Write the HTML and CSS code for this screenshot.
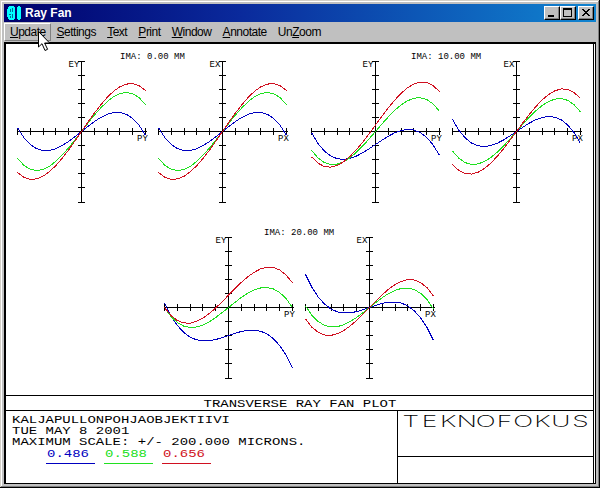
FILE: index.html
```
<!DOCTYPE html>
<html lang="en">
<head>
    <meta charset="UTF-8">
    <title>Ray Fan</title>
    <link rel="stylesheet" href="styles.css">
</head>
<body>
    <div class="window">
        <div class="titlebar">
            <svg class="app-icon" width="16" height="16" viewBox="0 0 16 16">
                <path d="M3 1h5v1h1v12h-1v1h-5v-1h-1v-2h-1v-8h1v-2h1z" fill="#00ffff"/>
                <path d="M4 4h1v3h-1zM6 3h1v4h-1zM3 9h2v1h-2zM6 9h1v4h-1zM4 11h1v2h-1z" fill="#006a9a"/>
                <path d="M12 1h2v1h1v12h-1v1h-2v-1h-1v-12h1z" fill="#00ffff"/>
            </svg>
            <span class="title">Ray Fan</span>
            <div class="controls">
                <span class="control"><svg width="14" height="12"><path d="M3 8h6v2h-6z"/></svg></span>
                <span class="control"><svg width="14" height="12"><path d="M2 1h9v9h-9zM3 3v6h7v-6z" fill-rule="evenodd"/></svg></span>
                <span class="control close"><svg width="14" height="12"><path d="M3 2h2v1h1v1h2v-1h1v-1h2v1h-1v1h-1v1h-1v1h1v1h1v1h1v1h-2v-1h-1v-1h-2v1h-1v1h-2v-1h1v-1h1v-1h1v-1h-1v-1h-1v-1h-1z"/></svg></span>
            </div>
        </div>

        <div class="menubar">
            <span class="menu-item active"><u>U</u>pdate</span>
            <span class="menu-item"><u>S</u>ettings</span>
            <span class="menu-item"><u>T</u>ext</span>
            <span class="menu-item"><u>P</u>rint</span>
            <span class="menu-item"><u>W</u>indow</span>
            <span class="menu-item"><u>A</u>nnotate</span>
            <span class="menu-item">Un<u>Z</u>oom</span>
        </div>

        <div class="client">
            <div class="sheet">
                <svg id="plots" class="plots" width="587" height="351"></svg>
                <div class="caption"><span class="plotter">TRANSVERSE RAY FAN PLOT</span></div>
                <div class="footer">
                    <div class="info">
                        <div class="plotter">KALJAPULLONPOHJAOBJEKTIIVI</div>
                        <div class="plotter">TUE MAY 8 2001</div>
                        <div class="plotter">MAXIMUM SCALE: +/- 200.000 MICRONS.</div>
                        <div class="legend">
                            <div class="wave blue"><span class="plotter">0.486</span></div>
                            <div class="wave green"><span class="plotter">0.588</span></div>
                            <div class="wave red"><span class="plotter">0.656</span></div>
                        </div>
                    </div>
                    <div class="company">
                        <div class="company-name">
                            <svg width="195" height="45">
                                <text class="brand" transform="scale(1.6 1)" x="8 19.7 31.4 43 54.8 66.6 78.2 90.3 101.8 114" y="16">TEKNOFOKUS</text>
                            </svg>
                        </div>
                        <div class="company-note"></div>
                    </div>
                </div>
            </div>
        </div>

        <svg class="cursor" width="13" height="21" viewBox="0 0 13 21">
            <path d="M.5 .5v15.5l3.5-3.3 3 6.8 2.6-1.2-3-6.3h5z" fill="#fff" stroke="#000"/>
        </svg>
    </div>
    <script src="plots.js"></script>
</body>
</html>
```
FILE: styles.css
```
body {
    margin: 0;
    background: #c0c0c0;
    font-family: "Liberation Sans", Arial, sans-serif;
    font-size: 12px;
    color: #000;
}

.window {
    position: relative;
    box-sizing: border-box;
    width: 600px;
    height: 488px;
    padding: 4px;
    background: #c0c0c0;
    box-shadow: inset -1px -1px #000, inset 1px 1px #d4d0c8, inset -2px -2px #808080, inset 2px 2px #fff;
}

.titlebar {
    display: flex;
    align-items: center;
    height: 18px;
    padding: 0 2px;
    background: linear-gradient(90deg, #00006c, #0a2a9c 40%, #1084d0);
}

.app-icon {
    display: block;
    shape-rendering: crispEdges;
}

.title {
    flex: 1;
    margin-left: 3px;
    color: #fff;
    font-weight: bold;
    line-height: 18px;
}

.controls {
    display: flex;
}

.control {
    box-sizing: border-box;
    width: 16px;
    height: 14px;
    border: 1px solid;
    border-color: #fff #000 #000 #fff;
    background: #c0c0c0;
    box-shadow: inset -1px -1px #808080;
}

.control svg {
    display: block;
    shape-rendering: crispEdges;
}

.control.close {
    margin-left: 2px;
}

.menubar {
    display: flex;
    align-items: center;
    height: 20px;
}

.menu-item {
    box-sizing: border-box;
    height: 18px;
    padding: 0 4.6px;
    border: 1px solid transparent;
    line-height: 17px;
    letter-spacing: -0.5px;
}

.menu-item u {
    text-underline-offset: 1px;
}

.menu-item.active {
    width: 47px;
    padding: 0 0 0 5px;
    border-color: #fff #808080 #808080 #fff;
}

.client {
    box-sizing: border-box;
    height: 442px;
    padding-right: 1px;
    border: solid #000;
    border-width: 2px 1px 1px 2px;
    background: #fff;
}

.sheet {
    border-right: 1px solid #000;
}

.plots {
    display: block;
}

.axis {
    stroke: #000;
    fill: none;
    shape-rendering: crispEdges;
}

.curve {
    fill: none;
    shape-rendering: crispEdges;
}

.label {
    font: 9px "Liberation Mono", monospace;
}

.plotter {
    display: inline-block;
    font: 11px/11px "Liberation Mono", monospace;
    transform: scaleX(1.27);
    transform-origin: left;
    white-space: pre;
}

.caption {
    height: 14px;
    border: solid #000;
    border-width: 1px 0;
    text-align: center;
    line-height: 14px;
}

.caption .plotter {
    transform-origin: center;
    line-height: 14px;
}

.footer {
    display: grid;
    grid-template-columns: 391px 1fr;
    height: 72px;
}

.info {
    padding: 4px 0 0 6px;
}

.info > .plotter {
    display: block;
    width: 300px;
}

.legend {
    display: flex;
    gap: 9px;
    margin: 0 0 0 34px;
}

.wave {
    width: 49px;
    height: 15px;
    border-bottom: 1px solid;
    line-height: 11px;
}

.blue {
    color: #0000c0;
    stroke: #0000c0;
}

.green {
    color: #20e020;
    stroke: #20e020;
}

.red {
    color: #d01020;
    stroke: #d01020;
}

.wave .plotter {
    margin-left: 1px;
}

.company {
    border-left: 1px solid #000;
}

.company-name {
    height: 45px;
    border-bottom: 1px solid #000;
}

.company-name svg {
    display: block;
}

.brand {
    font: 200 16.5px Inter, sans-serif;
    text-anchor: middle;
}

.cursor {
    position: absolute;
    left: 38px;
    top: 31px;
}
```
FILE: plots.js
```
const svg = document.getElementById('plots');

// polynomial coefficients c0..c3 of each curve, in pixels of ray error
const fields = [
    {
        label: 'IMA: 0.00 MM', x: 75, y: 87, labelX: 114,
        ey: { blue: [0, 51.8, 0, -55.5], green: [0, 83.6, 0, -56.8], red: [0, 93.5, 0, -52.6] },
        ex: { blue: [0, 51.8, 0, -55.5], green: [0, 83.6, 0, -56.8], red: [0, 93.5, 0, -52.6] }
    },
    {
        label: 'IMA: 10.00 MM', x: 369, y: 87, labelX: 405,
        ey: { blue: [-13, 43.7, 0.4, -55], green: [0, 75, 0.8, -55.6], red: [6.5, 87.9, 0.8, -55.3] },
        ex: { blue: [0, 44, 0, -56], green: [0, 73.5, 0, -54], red: [0, 87.5, 0, -54.5] }
    },
    {
        label: 'IMA: 20.00 MM', x: 222, y: 263, labelX: 258,
        ey: { blue: [-28, 22.3, 0, -54.5], green: [0, 52, 0, -52], red: [12.3, 65.9, 0, -53.6] },
        ex: { blue: [0, 22.6, 0, -55.6], green: [0, 51.5, 0, -53], red: [0, 66.1, 0, -54.6] }
    }
];

function add(tag, attrs, text) {
    const el = document.createElementNS('http://www.w3.org/2000/svg', tag);
    for (const name in attrs) el.setAttribute(name, attrs[name]);
    if (text) el.textContent = text;
    svg.appendChild(el);
}

function drawPlot(x, y, axis, curves) {
    const cx = x + 0.5;
    const cy = y + 0.5;
    let d = `M${cx - 64} ${cy}h129M${cx} ${cy - 71}v142`;
    for (let i = -5; i <= 5; i++) {
        d += `M${x + Math.round(i * 12.8) + 0.5} ${y - 3}v7`;
        d += `M${x - 3} ${y + Math.round(i * 14.1) + 0.5}h7`;
    }
    add('path', { class: 'axis', d: d });
    add('text', { class: 'label', x: x - 12.5, y: y - 64 }, 'E' + axis);
    add('text', { class: 'label', x: x + 56, y: y + 10 }, 'P' + axis);

    for (const color in curves) {
        const c = curves[color];
        const points = [];
        for (let i = -10; i <= 10; i++) {
            const p = i / 10;
            const value = c[0] + c[1] * p + c[2] * p * p + c[3] * p * p * p;
            points.push(`${(cx + p * 64).toFixed(1)},${(cy - value).toFixed(1)}`);
        }
        add('polyline', { class: 'curve ' + color, points: points.join(' ') });
    }
}

fields.forEach(field => {
    add('text', { class: 'label', x: field.labelX, y: field.y - 72 }, field.label);
    drawPlot(field.x, field.y, 'Y', field.ey);
    drawPlot(field.x + 141, field.y, 'X', field.ex);
});
```
